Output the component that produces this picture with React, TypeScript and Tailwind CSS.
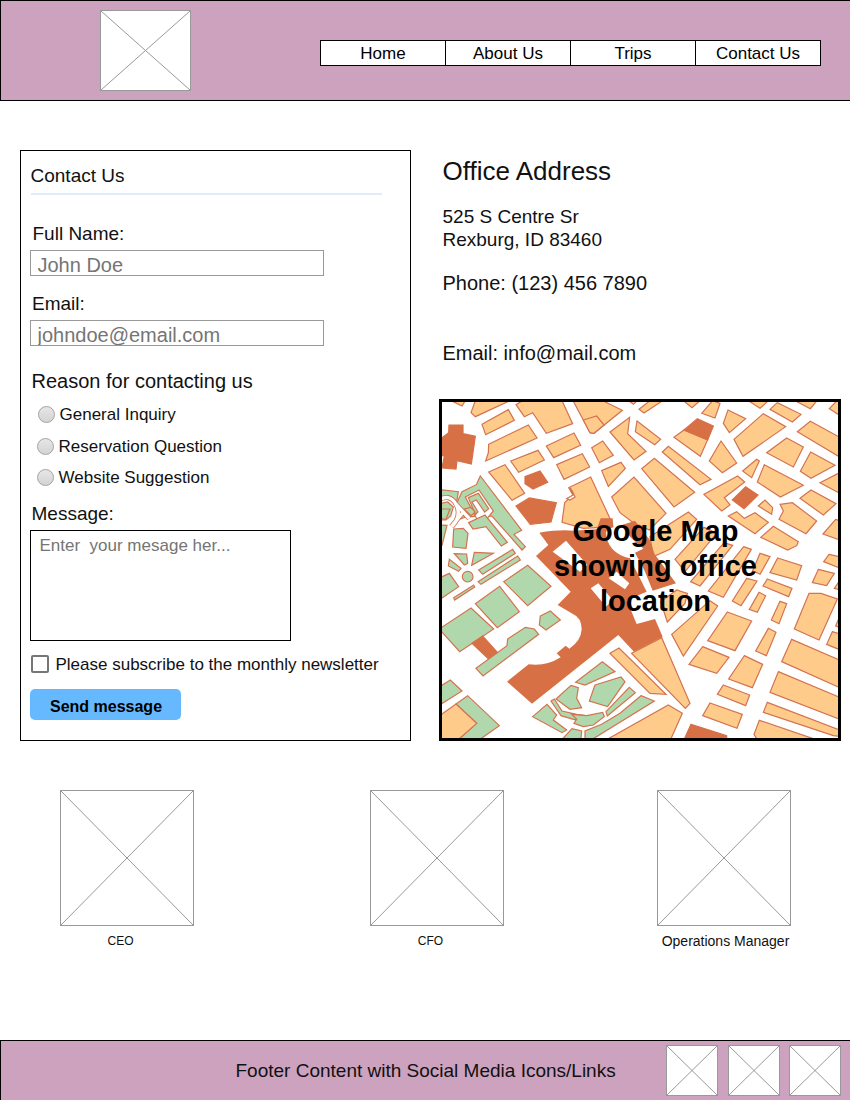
import React from "react";

type Shape = [kind: "o" | "g" | "d" | "w", points: string];
type Sheet = { x: number; y: number; shapes: Shape[] };

// City blocks, grouped by map sheet. o: building block, g: park, d: landmark, w: open ground
const sheets: Sheet[] = [
  {
    x: 0,
    y: 0,
    shapes: [
      ["o", "45,14 78,30 88,14"],
      ["o", "105,50 118,14 222,14 118,62"],
      ["o", "138,85 217,41 235,73 149,116"],
      ["o", "158,145 277,87 303,126 149,195 157,170"],
      ["o", "240,26 265,62 290,50 331,112 410,83 378,14 260,14"],
      ["o", "331,150 414,111 434,148 353,185"],
      ["o", "224,195 306,163 325,192 248,229"],
      ["o", "158,228 207,206 266,292 228,313"],
      ["o", "362,206 439,173 461,213 384,250"],
      ["o", "398,275 464,243 525,374 530,392 442,397 378,379 386,320 411,297"],
      ["w", "402,275 409,285 417,303 402,312 392,308 411,297"],
      ["d", "39,87 81,87 81,113 118,121 106,204 63,194 60,219 18,216 25,180 14,178 14,128 38,110"],
      ["d", "267,242 312,225 335,259 291,279 267,263"],
      ["d", "240,330 280,306 361,320 345,378 283,385"],
      ["g", "133,240 257,403 234,415 268,452 258,462 168,360 100,362 62,322 78,287 121,266"],
      ["w", "88,303 129,282 172,345 150,372 124,372"],
      ["g", "97,305 127,292 158,338 146,348 121,312 108,318 126,348 118,356"],
      ["g", "14,281 67,287 62,318 45,302 30,300 14,306"],
      ["g", "14,322 35,318 52,333 44,360 30,372 14,372"],
    ],
  },
  {
    x: 0,
    y: 342,
    shapes: [
      ["g", "98,38 147,15 214,97 196,108 150,50 111,57"],
      ["g", "60,31 68,3 88,22"],
      ["g", "84,-3 105,17 118,6 104,-8"],
      ["g", "14,-3 42,-3 30,28 14,26"],
      ["g", "14,45 33,46 18,106 14,106"],
      ["g", "53,57 82,55 96,70 90,115 50,111"],
      ["g", "55,131 92,132 95,160 85,165"],
      ["g", "115,127 172,130 107,166"],
      ["g", "40,148 75,175 68,184 37,168"],
      ["g", "14,202 40,190 68,230 14,267"],
      ["g", "128,180 230,118 238,130 140,193"],
      ["g", "126,215 245,138 253,150 135,223"],
      ["g", "53,263 113,225 116,231 56,270"],
      ["g", "203,215 275,166 345,229 275,287"],
      ["g", "118,281 191,229 250,305 184,353"],
      ["g", "14,354 105,294 173,357 71,425 14,362"],
      ["g", "313,318 343,303 373,330 330,360 310,345"],
    ],
  },
  {
    x: 0,
    y: 687,
    shapes: [
      ["d", "108,55 140,33 185,83 160,104"],
      ["g", "120,130 213,62 215,42 268,7 295,12 308,28 141,153"],
      ["g", "14,183 43,165 78,198 14,238"],
      ["g", "60,237 95,212 190,302 135,341 70,341 122,295"],
      ["o", "14,270 60,237 122,295 70,341 14,341"],
      ["g", "290,275 333,238 362,270 352,285 392,315 378,323"],
      ["g", "345,228 355,222 378,258 422,268 450,272 445,284 415,284 375,272"],
      ["g", "360,222 405,181 427,188 422,220 437,248 402,253"],
      ["g", "380,341 408,311 437,318 435,341"],
    ],
  },
  {
    x: 402,
    y: 0,
    shapes: [
      ["o", "9,14 98,14 157,43 72,112 60,110 40,72"],
      ["o", "40,72 80,60 102,87 72,112 60,110"],
      ["o", "176,14 190,25 202,14"],
      ["o", "207,40 240,14 278,14 222,51"],
      ["o", "340,14 366,35 390,14"],
      ["o", "120,108 179,64 173,113 228,166 192,192"],
      ["o", "201,75 272,130 254,146 196,107"],
      ["o", "65,155 98,135 130,178 88,200"],
      ["o", "95,224 153,199 166,217 115,271"],
      ["o", "215,218 253,187 374,289 312,333"],
      ["o", "277,168 295,151 423,250 390,266"],
      ["o", "312,124 342,102 413,131 391,181"],
      ["d", "342,102 382,68 430,90 413,132"],
      ["o", "395,52 428,14 450,22 435,66"],
      ["o", "125,303 192,243 288,352 238,402 190,380 150,350"],
      ["o", "402,295 503,240 524,258 463,305 480,327 455,345"],
    ],
  },
  {
    x: 402,
    y: 342,
    shapes: [
      ["o", "240,80 355,6 380,28 300,118 250,140"],
      ["o", "315,148 402,52 440,70 345,185"],
      ["o", "362,215 462,98 488,106 390,228"],
      ["o", "272,275 320,240 352,250 345,280 292,336"],
      ["o", "305,373 420,272 443,288 340,438"],
    ],
  },
  {
    x: 402,
    y: 687,
    shapes: [
      ["o", "185,85 275,38 360,235 346,250"],
      ["o", "120,85 147,69 288,208 240,205"],
      ["o", "295,240 337,265 303,341 115,341"],
      ["g", "17,172 97,110 135,140 45,180"],
      ["g", "75,180 153,156 165,170 113,245 58,228"],
      ["g", "178,187 196,203 112,273 108,260"],
      ["g", "213,212 253,228 70,341 45,341 45,318 95,298 150,265"],
      ["g", "12,295 20,282 5,268 50,272 98,262 103,275 70,300 40,305"],
    ],
  },
  {
    x: 807,
    y: 0,
    shapes: [
      ["o", "69,42 122,68 73,110 55,82"],
      ["o", "175,53 242,92 114,181 87,130"],
      ["o", "195,40 217,20 288,55 262,78"],
      ["o", "130,14 165,37 190,14"],
      ["o", "270,14 316,38 336,14"],
      ["o", "373,38 396,14 404,14 404,58"],
      ["o", "277,107 316,76 404,124 404,183"],
      ["o", "48,135 95,201 52,230 13,195"],
      ["o", "245,126 295,153 265,213 185,170"],
      ["o", "317,168 390,208 318,247 286,226"],
      ["o", "113,225 155,190 163,195 140,245"],
      ["o", "178,206 295,268 226,303 157,258"],
      ["o", "345,260 404,230 404,292"],
      ["o", "285,307 318,282 393,323 355,357"],
      ["d", "82,312 122,272 159,297 117,338"],
      ["o", "160,330 180,312 203,335 200,355"],
      ["o", "225,325 262,320 335,375 303,413 222,370 235,345"],
      ["o", "70,360 95,347 118,367 150,350 190,379 150,413"],
    ],
  },
  {
    x: 807,
    y: 342,
    shapes: [
      ["o", "354,72 392,28 404,32 404,90"],
      ["o", "167,82 205,49 280,95 275,107 248,120"],
      ["o", "372,133 404,140 404,174 356,155"],
      ["o", "340,178 388,190 365,227 322,218"],
      ["o", "388,235 404,212 404,240"],
      ["o", "218,144 290,167 275,210 195,188"],
      ["o", "187,207 261,235 251,260 174,228"],
      ["o", "116,110 139,118 55,262 10,243"],
      ["o", "165,130 195,140 165,193 143,182"],
      ["o", "125,205 156,213 108,287 82,273"],
      ["o", "162,247 182,257 157,307 133,298"],
      ["o", "225,274 245,281 222,341 199,330"],
      ["o", "312,250 348,250 397,267 342,390 268,357"],
      ["o", "67,306 140,333 90,422 8,392"],
      ["o", "392,348 404,320 404,353"],
      ["o", "190,355 213,367 184,437 152,423"],
    ],
  },
  {
    x: 807,
    y: 687,
    shapes: [
      ["o", "118,92 173,118 142,188 71,162"],
      ["o", "-7,65 72,97 35,145 -48,118"],
      ["o", "55,180 134,210 122,242 37,208"],
      ["o", "15,234 112,268 96,310 -7,272"],
      ["o", "260,43 404,105 404,188 230,110"],
      ["o", "220,140 404,217 404,283 195,202"],
      ["o", "187,232 404,315 404,334 385,332 175,262"],
      ["o", "163,286 325,341 155,341 147,328"],
      ["o", "382,20 404,27 404,74 365,58"],
      ["d", "-42,298 65,332 65,342 -62,342"],
    ],
  },
];

const shapeClass = {
  o: "fill-[#ffcb8b] stroke-[#d37350]",
  g: "fill-[#b1d8ac] stroke-[#d37350]",
  d: "fill-[#d87045] stroke-[#d87045]",
  w: "fill-white stroke-[#d37350]",
};

const parkPaths = "M8 312Q42 292 60 325T48 392M46 392L84 345M58 322L100 368";

function CityMap() {
  return (
    <svg viewBox="18 18 1188 1008" preserveAspectRatio="none" className="block h-full w-full" strokeWidth="3.6">
      {sheets.map((s, i) => (
        <g key={i} transform={`translate(${s.x} ${s.y})`}>
          {s.shapes.map(([kind, points], j) => (
            <polygon key={j} points={points} className={shapeClass[kind]} />
          ))}
        </g>
      ))}
      <circle cx="95" cy="542" r="16" className="fill-[#b1d8ac] stroke-[#d37350]" />
      <path d={parkPaths} className="fill-none stroke-[#d37350]" strokeWidth="15" />
      <path d={parkPaths} className="fill-none stroke-white" strokeWidth="10" />
      <path
        className="fill-[#d87045]"
        d="M310 410Q370 400 412 404L482 400L494 367L530 367L532 392L510 407Q512 470 582 487L632 587L572 612L602 684L657 669L680 722L594 767L547 717L288 923L213 857L278 805Q330 812 374 784L362 772L389 749L400 758Q435 735 437 700Q436 665 412 655L365 627L404 587L300 480L337 447Z"
      />
      <path className="fill-[#d87045]" d="M555 388L597 374L640 430L656 475L720 562L650 584L626 525L597 470L622 458L585 425Z" />
      <path className="fill-white" d="M350 467L390 434L454 507L432 527ZM464 577L487 562L530 612L510 632ZM518 547L542 527L580 562L567 580Z" />
    </svg>
  );
}

function Placeholder({ className }: { className: string }) {
  return (
    <svg viewBox="0 0 100 100" preserveAspectRatio="none" className={`block shrink-0 border border-[#999] bg-white ${className}`}>
      <path d="M0 0L100 100M100 0L0 100" className="fill-none stroke-[#999]" strokeWidth="1" vectorEffect="non-scaling-stroke" />
    </svg>
  );
}

function Reason({ label, className }: { label: string; className: string }) {
  return (
    <label className={`flex h-6 items-center text-[17px] ${className}`}>
      <input
        type="radio"
        name="reason"
        className="mr-[5px] h-[17px] w-[17px] shrink-0 appearance-none rounded-full border border-[#a3a3a3] bg-linear-to-b from-[#e6e6e6] to-[#d4d4d4]"
      />
      <span className="pt-[2px]">{label}</span>
    </label>
  );
}

const inputClass =
  "mt-1 block h-[26px] w-[294px] border border-[#999] bg-white pt-[4px] pl-[6.5px] text-[20px] leading-[22px] placeholder:text-[#757575]";

export default function App() {
  return (
    <div className="flex h-[1100px] w-[850px] flex-col overflow-hidden bg-white font-['Liberation_Sans',Arial,sans-serif] text-[#111]">
      <header className="flex h-[101px] shrink-0 border-y border-l border-black bg-[#cda2be] pt-[9px] pl-[99px]">
        <Placeholder className="h-[81px] w-[91px]" />
        <nav className="mt-[30px] ml-[129px] flex h-[26px] w-[501px] border border-black bg-white text-[17px] text-black">
          {["Home", "About Us", "Trips", "Contact Us"].map((item) => (
            <a key={item} className="flex w-[125px] items-center justify-center border-r border-black pt-[2px] last:w-[124px] last:border-r-0">
              {item}
            </a>
          ))}
        </nav>
      </header>

      <main className="mt-[49px] flex h-[591px] shrink-0">
        <form className="ml-5 flex w-[391px] flex-col items-start border border-black pt-[14px] pl-[9px]">
          <h2 className="ml-[0.5px] h-[21px] text-[19px] leading-[21px]">Contact Us</h2>
          <div className="mt-[7px] ml-px h-[2px] w-[351px] bg-[#dfedfb]" />
          <label className="mt-[27px] ml-[2.5px] h-6 text-[19px] leading-6">Full Name:</label>
          <input className={inputClass} placeholder="John Doe" />
          <label className="mt-4 ml-[2px] h-6 text-[19px] leading-6">Email:</label>
          <input className={inputClass} placeholder="johndoe@email.com" />
          <h3 className="mt-[23px] ml-[1.5px] h-6 text-[20px] leading-6">Reason for contacting us</h3>
          <Reason label="General Inquiry" className="mt-[9px] ml-[7.5px]" />
          <Reason label="Reservation Question" className="mt-2 ml-[6.5px]" />
          <Reason label="Website Suggestion" className="mt-[7px] ml-[6.5px]" />
          <label className="mt-[13px] ml-[1.5px] h-6 text-[19px] leading-6">Message:</label>
          <textarea
            className="mt-1 block h-[111px] w-[261px] resize-none border border-black bg-white pt-[5px] pl-[8.5px] text-[17px] leading-5 placeholder:text-[#757575]"
            placeholder="Enter  your mesage her..."
          />
          <label className="mt-[11px] ml-px flex h-6 items-center text-[17px] whitespace-nowrap">
            <input type="checkbox" className="mr-[6.5px] h-[18px] w-[18px] shrink-0 appearance-none rounded-[2px] border-2 border-[#767676]" />
            <span className="pt-[2px]">Please subscribe to the monthly newsletter</span>
          </label>
          <button type="button" className="mt-[13px] flex h-[31px] w-[151px] items-center justify-center rounded-[5px] bg-[#66b8ff] pt-[4px] pl-px text-[16px] font-bold text-black">
            Send message
          </button>
        </form>

        <section className="ml-7 flex w-[402px] flex-col">
          <div className="flex flex-col pl-[3.5px] text-[20px] leading-6">
            <h2 className="mt-[6px] h-[30px] text-[26px] leading-[30px]">Office Address</h2>
            <p className="mt-[19px] text-[19px] leading-[23px]">
              525 S Centre Sr
              <br />
              Rexburg, ID 83460
            </p>
            <p className="mt-[20px]">Phone: (123) 456 7890</p>
            <p className="mt-[46px]">Email: info@mail.com</p>
          </div>
          <div className="relative mt-[34px] h-[342px] w-[402px] shrink-0 border-3 border-black bg-white">
            <CityMap />
            <p className="absolute inset-x-0 top-[112px] pl-[31px] text-center text-[29px] leading-[35px] font-bold text-black">
              Google Map
              <br />
              showing office
              <br />
              location
            </p>
          </div>
        </section>
      </main>

      <section className="mt-[49px] flex h-[160px] shrink-0 text-[12px]">
        <figure className="ml-[60px] w-[134px]">
          <Placeholder className="h-[136px] w-[134px]" />
          <figcaption className="mt-[6px] pr-[13px] text-center leading-[18px]">CEO</figcaption>
        </figure>
        <figure className="ml-[176px] w-[134px]">
          <Placeholder className="h-[136px] w-[134px]" />
          <figcaption className="mt-[6px] pr-[13px] text-center leading-[18px]">CFO</figcaption>
        </figure>
        <figure className="ml-[153px] w-[134px]">
          <Placeholder className="h-[136px] w-[134px]" />
          <figcaption className="mt-[6px] pl-[3px] text-center text-[14px] leading-[18px] whitespace-nowrap">Operations Manager</figcaption>
        </figure>
      </section>

      <footer className="mt-auto flex h-[60px] shrink-0 items-center border-t border-l border-black bg-[#cda2be]">
        <p className="ml-[234.5px] w-[430.5px] pt-[2px] text-[19px] whitespace-nowrap">Footer Content with Social Media Icons/Links</p>
        <div className="flex gap-[9.5px]">
          <Placeholder className="h-[51px] w-[52px]" />
          <Placeholder className="h-[51px] w-[52px]" />
          <Placeholder className="h-[51px] w-[52px]" />
        </div>
      </footer>
    </div>
  );
}
